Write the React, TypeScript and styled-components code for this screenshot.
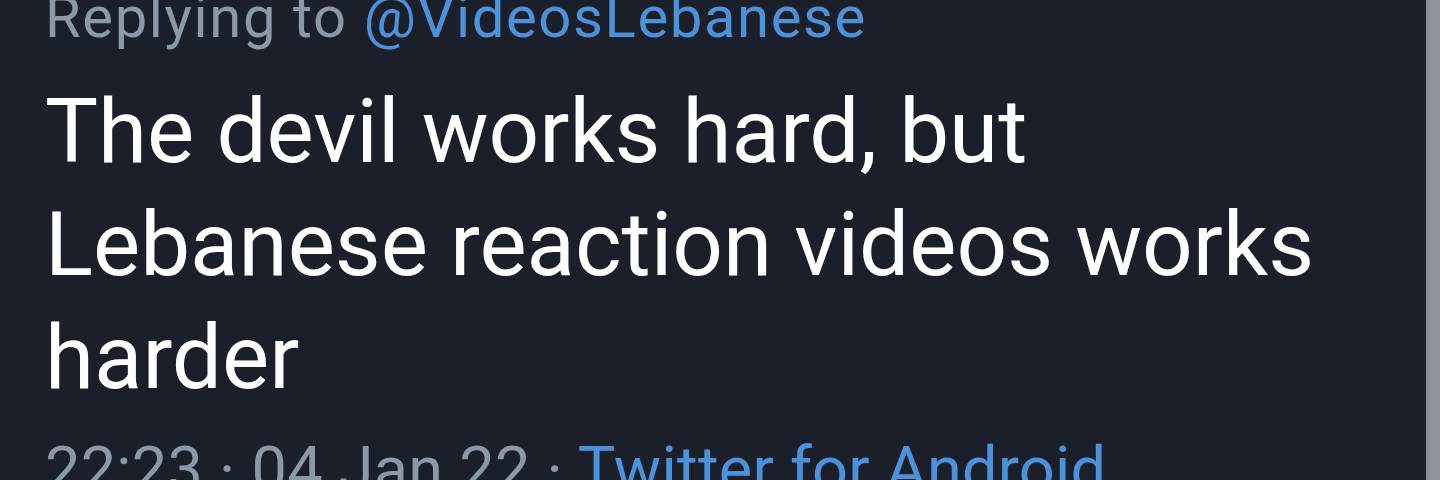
import React from "react";
import styled, { createGlobalStyle } from "styled-components";

const Global = createGlobalStyle`
  html, body { margin: 0; padding: 0; background: #1a1f29; }
  body { width: 1440px; height: 480px; overflow: hidden; }
  #root { height: 480px; }
`;

const Screen = styled.div`
  display: flex;
  width: 1440px;
  height: 480px;
  overflow: hidden;
  background: #1a1f29;
`;

const Tweet = styled.div`
  flex: 1;
  display: flex;
  flex-direction: column;
  padding-left: 45px;
  margin-top: -19px;
`;

const ReplyLine = styled.div`
  font-family: Roboto, "Noto Sans", sans-serif;
  font-size: 58px;
  line-height: 72px;
  letter-spacing: 1.6px;
  color: #8b98a5;
  white-space: nowrap;
`;

const Mention = styled.span`
  color: #4a92dc;
`;

const Body = styled.div`
  margin-top: 22px;
  font-family: Roboto, "Noto Sans", sans-serif;
  font-size: 89px;
  line-height: 113px;
  color: #ffffff;
  width: 1300px;
`;

const Meta = styled.div`
  margin-top: 16px;
  font-family: Roboto, "Noto Sans", sans-serif;
  font-size: 63px;
  line-height: 80px;
  letter-spacing: 0.25px;
  color: #8b98a5;
  white-space: nowrap;
`;

const Source = styled.span`
  color: #4a92dc;
`;

const Scrollbar = styled.div`
  width: 14px;
  flex: none;
  background: #909399;
  border-left: 3px solid #888d96;
  box-sizing: border-box;
`;

export default function App() {
  return (
    <>
      <Global />
      <Screen>
        <Tweet>
          <ReplyLine>
            Replying to <Mention>@VideosLebanese</Mention>
          </ReplyLine>
          <Body>
            The devil works hard, but
            <br />
            Lebanese reaction videos works
            <br />
            harder
          </Body>
          <Meta>
            22:23 · 04 Jan 22 · <Source>Twitter for Android</Source>
          </Meta>
        </Tweet>
        <Scrollbar />
      </Screen>
    </>
  );
}
